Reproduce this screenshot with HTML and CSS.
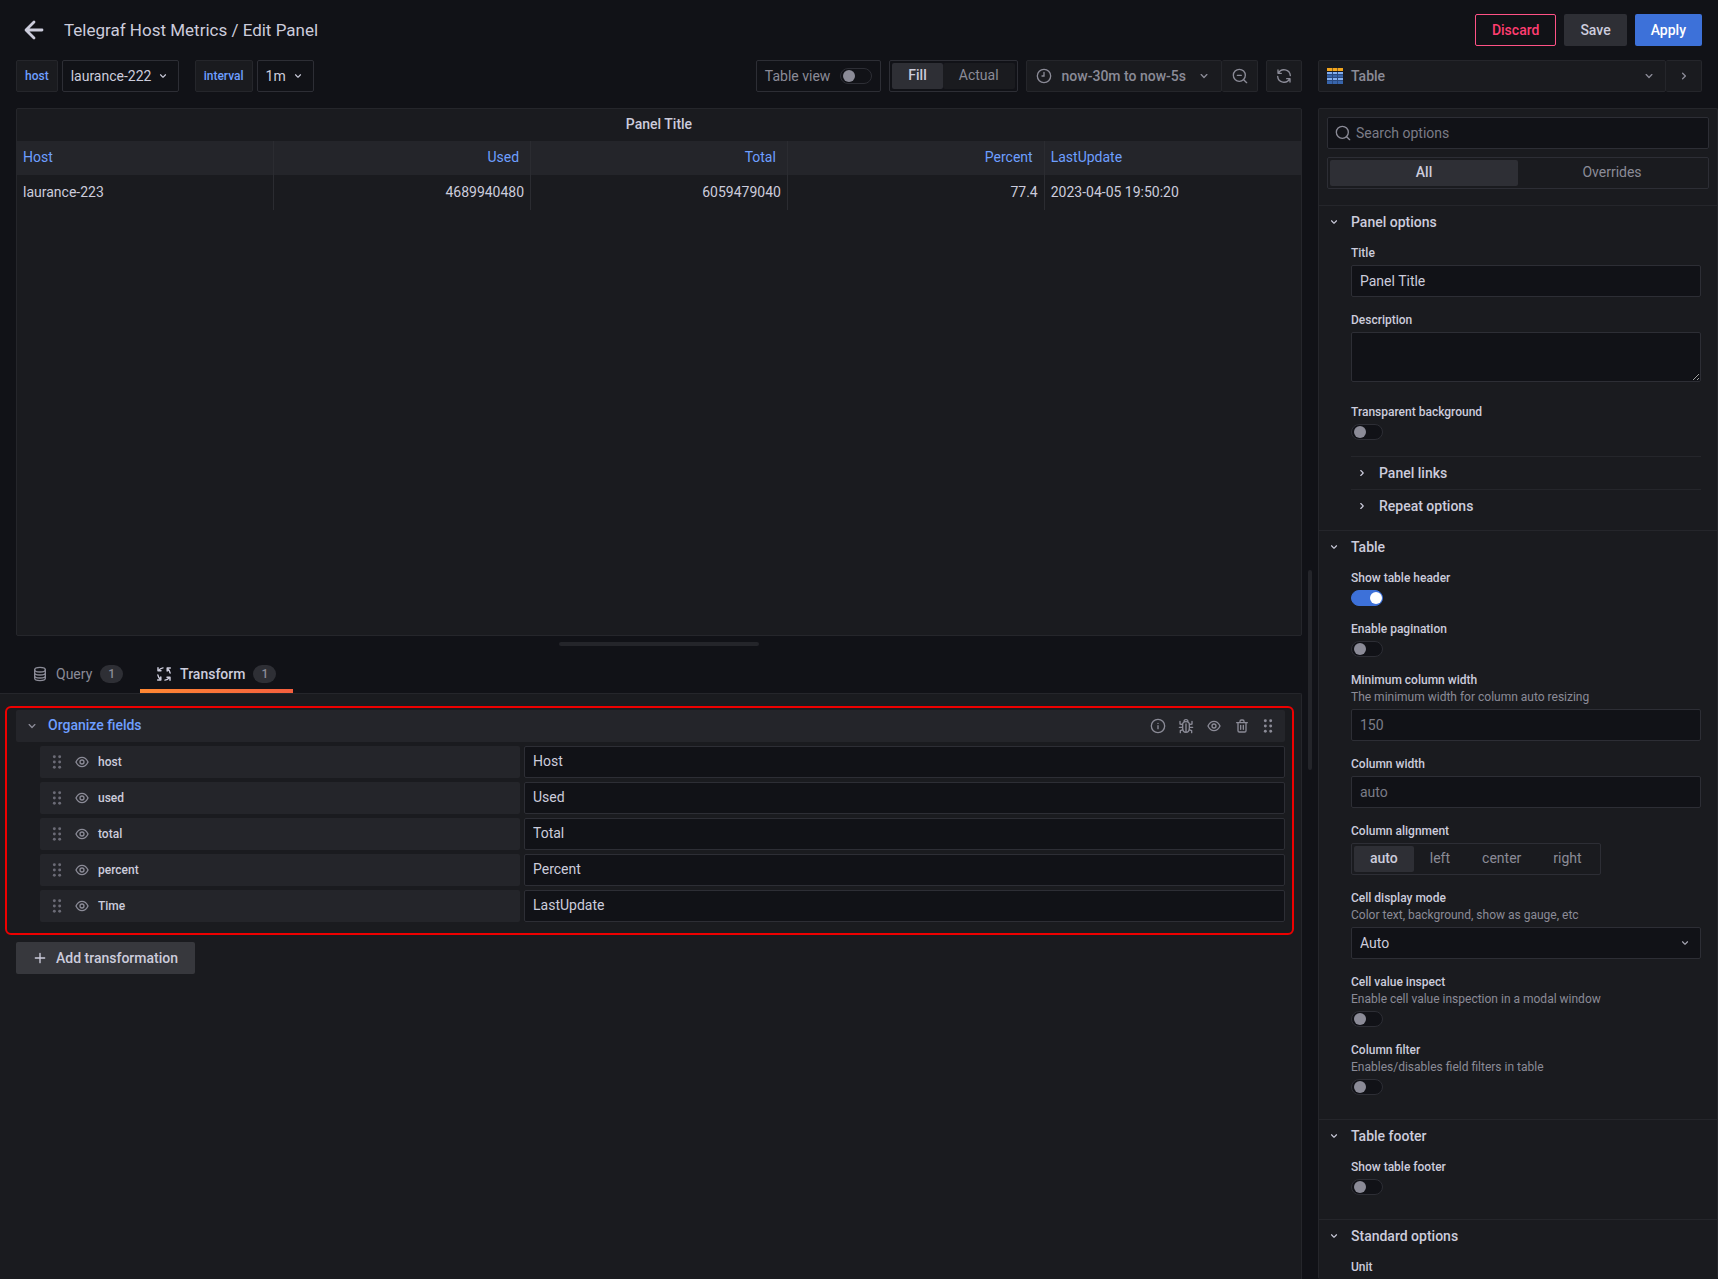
FILE: index.html
```html
<!DOCTYPE html>
<html lang="en">
<head>
<meta charset="utf-8">
<title>Telegraf Host Metrics / Edit Panel</title>
<link rel="stylesheet" href="styles.css">
</head>
<body>
<svg class="sprite" aria-hidden="true">
  <symbol id="i-down" viewBox="0 0 24 24"><path fill="currentColor" d="M17,9.17a1,1,0,0,0-1.41,0L12,12.71,8.46,9.17a1,1,0,0,0-1.41,0,1,1,0,0,0,0,1.42l4.24,4.24a1,1,0,0,0,1.42,0L17,10.59A1,1,0,0,0,17,9.17Z"/></symbol>
  <symbol id="i-right" viewBox="0 0 24 24"><path fill="currentColor" d="M14.83,11.29,10.59,7.05a1,1,0,0,0-1.42,0,1,1,0,0,0,0,1.41L12.71,12,9.17,15.54a1,1,0,0,0,0,1.41,1,1,0,0,0,.71.29,1,1,0,0,0,.71-.29l4.24-4.24A1,1,0,0,0,14.83,11.29Z"/></symbol>
  <symbol id="i-eye" viewBox="0 0 24 24"><path fill="currentColor" d="M21.92,11.6C19.9,6.91,16.1,4,12,4S4.1,6.91,2.08,11.6a1,1,0,0,0,0,.8C4.1,17.09,7.9,20,12,20s7.9-2.91,9.92-7.6A1,1,0,0,0,21.92,11.6ZM12,18c-3.17,0-6.17-2.29-7.9-6C5.83,8.29,8.83,6,12,6s6.17,2.29,7.9,6C18.17,15.71,15.17,18,12,18ZM12,8a4,4,0,1,0,4,4A4,4,0,0,0,12,8Zm0,6a2,2,0,1,1,2-2A2,2,0,0,1,12,14Z"/></symbol>
  <symbol id="i-grip" viewBox="3 0 18 24"><g fill="currentColor"><circle cx="8" cy="4" r="2.2"/><circle cx="16" cy="4" r="2.2"/><circle cx="8" cy="12" r="2.2"/><circle cx="16" cy="12" r="2.2"/><circle cx="8" cy="20" r="2.2"/><circle cx="16" cy="20" r="2.2"/></g></symbol>
  <symbol id="i-turn" viewBox="0 0 24 24"><path fill="none" stroke="currentColor" stroke-width="2.2" stroke-linecap="round" stroke-linejoin="round" d="M3 2.500V7.200H7.500M3.800 7A9.800 9.800 0 0 1 10.500 2.800"/></symbol>
</svg>

<div class="editor">
  <header class="topbar">
    <button class="back" type="button" aria-label="Go back"><svg class="icon-l" viewBox="0 0 24 24" fill="none" stroke="currentColor" stroke-width="2.8" stroke-linecap="round" stroke-linejoin="round"><path d="M20 12H4.500M12 4l-8 8 8 8"/></svg></button>
    <h1>Telegraf Host Metrics / Edit Panel</h1>
    <div class="actions">
      <button class="btn danger" type="button">Discard</button>
      <button class="btn" type="button">Save</button>
      <button class="btn primary" type="button">Apply</button>
    </div>
  </header>

  <div class="columns">
    <main class="left">
      <div class="toolbar">
        <div class="variable">
          <label class="var-label" for="var-host">host</label>
          <span class="picker"><select id="var-host"><option>laurance-222</option></select><svg class="icon"><use href="#i-down"/></svg></span>
        </div>
        <div class="variable">
          <label class="var-label" for="var-interval">interval</label>
          <span class="picker"><select id="var-interval"><option>1m</option></select><svg class="icon"><use href="#i-down"/></svg></span>
        </div>
        <div class="view-tools">
          <label class="table-view">Table view <input class="switch" type="checkbox"></label>
          <div class="segments dark">
            <label><input type="radio" name="size" checked><span>Fill</span></label>
            <label><input type="radio" name="size"><span>Actual</span></label>
          </div>
          <div class="joined">
            <button class="tool time" type="button">
              <svg class="icon" viewBox="0 0 24 24" fill="none" stroke="currentColor" stroke-width="2" stroke-linecap="round"><circle cx="12" cy="12" r="10"/><path d="M12 6.500V12H9"/></svg>
              <span>now-30m to now-5s</span>
              <svg class="icon"><use href="#i-down"/></svg>
            </button>
            <button class="tool square" type="button" aria-label="Zoom out"><svg class="icon" viewBox="0 0 24 24" fill="none" stroke="currentColor" stroke-width="2" stroke-linecap="round"><circle cx="11" cy="11" r="9"/><path d="M8 11h6M17.500 17.500 22 22"/></svg></button>
          </div>
          <button class="tool square" type="button" aria-label="Refresh"><svg class="icon" viewBox="0 0 24 24" fill="none" stroke="currentColor" stroke-width="2" stroke-linecap="round" stroke-linejoin="round"><path d="M3 3v5h5M3.500 8A9.500 9.500 0 0 1 21.500 11.500M21 21v-5h-5M20.500 16A9.500 9.500 0 0 1 2.500 12.500"/></svg></button>
        </div>
      </div>

      <div class="panes">
        <section class="panel">
          <h2>Panel Title</h2>
          <table>
            <thead>
              <tr><th>Host</th><th class="num">Used</th><th class="num">Total</th><th class="num">Percent</th><th>LastUpdate</th></tr>
            </thead>
            <tbody>
              <tr><td>laurance-223</td><td class="num">4689940480</td><td class="num">6059479040</td><td class="num">77.4</td><td>2023-04-05 19:50:20</td></tr>
            </tbody>
          </table>
        </section>

        <section class="bottom">
          <div class="drag-x"></div>
          <nav class="tabs">
            <button class="tab" type="button">
              <svg class="icon" viewBox="0 0 24 24" fill="none" stroke="currentColor" stroke-width="2" stroke-linecap="round"><ellipse cx="12" cy="5.500" rx="8" ry="3.500"/><path d="M4 5.500v13c0 2 3.600 3.500 8 3.500s8-1.500 8-3.500v-13M4 10c0 2 3.600 3.500 8 3.500s8-1.500 8-3.500M4 14.500c0 2 3.600 3.500 8 3.500s8-1.500 8-3.500"/></svg>
              Query <span class="count">1</span>
            </button>
            <button class="tab active" type="button">
              <svg class="icon" viewBox="0 0 24 24"><use href="#i-turn"/><use href="#i-turn" transform="rotate(90 12 12)"/><use href="#i-turn" transform="rotate(180 12 12)"/><use href="#i-turn" transform="rotate(270 12 12)"/></svg>
              Transform <span class="count">1</span>
            </button>
          </nav>
          <div class="transforms">
            <section class="highlight">
              <header class="op-head">
                <svg class="icon"><use href="#i-down"/></svg>
                <h3>Organize fields</h3>
                <div class="op-tools">
                  <button class="ghost" type="button" aria-label="Info"><svg class="icon" viewBox="0 0 24 24" fill="none" stroke="currentColor" stroke-width="2" stroke-linecap="round"><circle cx="12" cy="12" r="10"/><path d="M12 11.500V16M12 8v.1"/></svg></button>
                  <button class="ghost" type="button" aria-label="Debug"><svg class="icon" viewBox="0 0 24 24" fill="none" stroke="currentColor" stroke-width="2" stroke-linecap="round" stroke-linejoin="round"><path d="M7 10c0-3 2-4.500 5-4.500s5 1.500 5 4.500v5c0 4-2 6.500-5 6.500S7 19 7 15zM12 9v12M9 5.500C9 3.500 10 2.500 12 2.500s3 1 3 3M7 10 3 9V5M17 10l4-1V5M7 14H2M17 14h5M7.500 17.500 3.500 19v3M16.500 17.500l4 1.500v3"/></svg></button>
                  <button class="ghost" type="button" aria-label="Disable"><svg class="icon"><use href="#i-eye"/></svg></button>
                  <button class="ghost" type="button" aria-label="Remove"><svg class="icon" viewBox="0 0 24 24"><path fill="currentColor" d="M10,18a1,1,0,0,0,1-1V11a1,1,0,0,0-2,0v6A1,1,0,0,0,10,18ZM20,6H16V5a3,3,0,0,0-3-3H11A3,3,0,0,0,8,5V6H4A1,1,0,0,0,4,8H5V19a3,3,0,0,0,3,3h8a3,3,0,0,0,3-3V8h1a1,1,0,0,0,0-2ZM10,5a1,1,0,0,1,1-1h2a1,1,0,0,1,1,1V6H10Zm7,14a1,1,0,0,1-1,1H8a1,1,0,0,1-1-1V8H17Zm-3-1a1,1,0,0,0,1-1V11a1,1,0,0,0-2,0v6A1,1,0,0,0,14,18Z"/></svg></button>
                  <svg class="icon grip"><use href="#i-grip"/></svg>
                </div>
              </header>
              <div class="rows">
                <div class="row"><div class="name"><svg class="icon grip"><use href="#i-grip"/></svg><button class="ghost" type="button" aria-label="Hide host"><svg class="icon"><use href="#i-eye"/></svg></button><label for="f-host">host</label></div><input class="text" id="f-host" value="Host"></div>
                <div class="row"><div class="name"><svg class="icon grip"><use href="#i-grip"/></svg><button class="ghost" type="button" aria-label="Hide used"><svg class="icon"><use href="#i-eye"/></svg></button><label for="f-used">used</label></div><input class="text" id="f-used" value="Used"></div>
                <div class="row"><div class="name"><svg class="icon grip"><use href="#i-grip"/></svg><button class="ghost" type="button" aria-label="Hide total"><svg class="icon"><use href="#i-eye"/></svg></button><label for="f-total">total</label></div><input class="text" id="f-total" value="Total"></div>
                <div class="row"><div class="name"><svg class="icon grip"><use href="#i-grip"/></svg><button class="ghost" type="button" aria-label="Hide percent"><svg class="icon"><use href="#i-eye"/></svg></button><label for="f-percent">percent</label></div><input class="text" id="f-percent" value="Percent"></div>
                <div class="row"><div class="name"><svg class="icon grip"><use href="#i-grip"/></svg><button class="ghost" type="button" aria-label="Hide Time"><svg class="icon"><use href="#i-eye"/></svg></button><label for="f-time">Time</label></div><input class="text" id="f-time" value="LastUpdate"></div>
              </div>
            </section>
            <button class="btn add" type="button"><svg class="icon" viewBox="0 0 24 24" fill="none" stroke="currentColor" stroke-width="2" stroke-linecap="round"><path d="M12 5v14M5 12h14"/></svg>Add transformation</button>
          </div>
        </section>
      </div>
    </main>

    <div class="gutter"><div class="drag-y"></div></div>

    <aside class="right">
      <div class="toolbar viz">
        <button class="tool viz-name" type="button">
          <svg class="icon" viewBox="0 0 16 16" shape-rendering="crispEdges"><path fill="#8a6420" d="M0 0h16v3H0z"/><path fill="#2a4a80" d="M0 4h16v12H0z"/><path fill="#3865ab" d="M0 7h5v2H0zM6 7h4v2H6zM11 7h5v2h-5zM0 13h5v3H0zM6 13h4v3H6zM11 13h5v3h-5z"/><path fill="#84aff1" d="M0 4h5v2H0zM6 4h4v2H6zM11 4h5v2h-5zM0 10h5v2H0zM6 10h4v2H6zM11 10h5v2h-5z"/><path fill="#f2a51e" d="M0 0h5v3H0zM6 0h4v3H6zM11 0h5v3h-5z"/></svg>
          <span>Table</span>
          <svg class="icon"><use href="#i-down"/></svg>
        </button>
        <button class="tool square" type="button" aria-label="Close options"><svg class="icon"><use href="#i-right"/></svg></button>
      </div>

      <div class="options">
        <div class="filters">
          <div class="search">
            <svg class="icon" viewBox="0 0 24 24" fill="none" stroke="currentColor" stroke-width="2" stroke-linecap="round"><circle cx="11" cy="11" r="9"/><path d="M17.500 17.500 22 22"/></svg>
            <input class="text" type="text" placeholder="Search options" aria-label="Search options">
          </div>
          <div class="segments wide">
            <label><input type="radio" name="scope" checked><span>All</span></label>
            <label><input type="radio" name="scope"><span>Overrides</span></label>
          </div>
        </div>

        <section class="group">
          <h3><svg class="icon"><use href="#i-down"/></svg>Panel options</h3>
          <div class="group-body">
            <div class="field"><label for="o-title">Title</label><input class="text" id="o-title" value="Panel Title"></div>
            <div class="field area"><label for="o-desc">Description</label><textarea id="o-desc"></textarea></div>
            <div class="field"><label for="o-transparent">Transparent background</label><input class="switch" id="o-transparent" type="checkbox"></div>
            <button class="sub" type="button"><svg class="icon"><use href="#i-right"/></svg>Panel links</button>
            <button class="sub" type="button"><svg class="icon"><use href="#i-right"/></svg>Repeat options</button>
          </div>
        </section>

        <section class="group">
          <h3><svg class="icon"><use href="#i-down"/></svg>Table</h3>
          <div class="group-body">
            <div class="field"><label for="o-header">Show table header</label><input class="switch" id="o-header" type="checkbox" checked></div>
            <div class="field"><label for="o-pages">Enable pagination</label><input class="switch" id="o-pages" type="checkbox"></div>
            <div class="field"><label for="o-min">Minimum column width</label><p>The minimum width for column auto resizing</p><input class="text" id="o-min" placeholder="150"></div>
            <div class="field"><label for="o-width">Column width</label><input class="text" id="o-width" placeholder="auto"></div>
            <div class="field">
              <span class="caption" id="o-align">Column alignment</span>
              <div class="segments" role="radiogroup" aria-labelledby="o-align">
                <label><input type="radio" name="align" checked><span>auto</span></label>
                <label><input type="radio" name="align"><span>left</span></label>
                <label><input type="radio" name="align"><span>center</span></label>
                <label><input type="radio" name="align"><span>right</span></label>
              </div>
            </div>
            <div class="field"><label for="o-mode">Cell display mode</label><p>Color text, background, show as gauge, etc</p><span class="picker full"><select id="o-mode"><option>Auto</option></select><svg class="icon"><use href="#i-down"/></svg></span></div>
            <div class="field"><label for="o-inspect">Cell value inspect</label><p>Enable cell value inspection in a modal window</p><input class="switch" id="o-inspect" type="checkbox"></div>
            <div class="field"><label for="o-filter">Column filter</label><p>Enables/disables field filters in table</p><input class="switch" id="o-filter" type="checkbox"></div>
          </div>
        </section>

        <section class="group">
          <h3><svg class="icon"><use href="#i-down"/></svg>Table footer</h3>
          <div class="group-body">
            <div class="field"><label for="o-footer">Show table footer</label><input class="switch" id="o-footer" type="checkbox"></div>
          </div>
        </section>

        <section class="group">
          <h3><svg class="icon"><use href="#i-down"/></svg>Standard options</h3>
          <div class="group-body">
            <div class="field"><span class="caption">Unit</span></div>
          </div>
        </section>
      </div>
    </aside>
  </div>
</div>
</body>
</html>
```
FILE: styles.css
```css
:root {
  --canvas: #111217;
  --surface: #1a1b1f;
  --raised: #24252a;
  --selected: #2e2f35;
  --text: #ccccdc;
  --muted: #8b8b97;
  --weak: #25262b;
  --line: #2d2e35;
  --link: #6e9fff;
  --blue: #3d71d9;
}

* { box-sizing: border-box; }

body {
  margin: 0;
  background: var(--canvas);
  color: var(--text);
  font: 14px/22px Roboto, "Liberation Sans", sans-serif;
}

h1, h2, h3, p { margin: 0; font-weight: 500; }
h3 { font-size: 14px; }

button, input, select, textarea { font: inherit; color: inherit; }
button { border: 0; background: none; padding: 0; }

.sprite { display: none; }
.icon { width: 16px; height: 16px; flex: none; }
.icon-l { width: 24px; height: 24px; }

.editor { display: flex; flex-direction: column; height: 100vh; }

/* Top bar */
.topbar { display: flex; align-items: center; height: 60px; padding: 0 16px 0 22px; flex: none; }
.back { display: flex; margin-right: 18px; }
.topbar h1 { font-size: 17px; font-weight: 400; }
.actions { display: flex; gap: 8px; margin-left: auto; }
.btn { display: inline-flex; align-items: center; gap: 8px; height: 32px; padding: 0 16px 1px; border-radius: 2px; background: var(--selected); font-weight: 500; }
.btn.primary { background: var(--blue); color: #fff; }
.btn.danger { background: none; border: 1px solid #ff5286; color: #ff3d71; }

/* Page columns */
.columns { display: flex; flex: 1; min-height: 0; }
.left { display: flex; flex-direction: column; flex: 1; min-width: 0; }
.gutter { display: flex; align-items: center; justify-content: center; width: 16px; }
.drag-y { width: 4px; height: 200px; border-radius: 2px; background: var(--raised); }
.right { display: flex; flex-direction: column; width: 400px; }

.toolbar { display: flex; gap: 16px; height: 48px; padding: 0 0 16px 16px; flex: none; }
.variable { display: flex; gap: 4px; }
.var-label { display: flex; align-items: center; padding: 0 8px; border: 1px solid var(--weak); border-radius: 2px; background: var(--surface); color: var(--link); font-size: 12px; font-weight: 500; }

.picker { display: inline-grid; align-items: center; }
.picker > * { grid-area: 1 / 1; }
.picker .icon { width: 14px; height: 14px; justify-self: end; margin-right: 9px; pointer-events: none; }
.picker select { appearance: none; height: 32px; padding: 0 26px 0 8px; border: 1px solid var(--line); border-radius: 2px; background: var(--canvas); }
.picker.full .icon { color: #a9a9b6; }

.view-tools { display: flex; gap: 8px; margin-left: auto; color: var(--muted); }
.table-view { display: flex; align-items: center; gap: 10px; padding: 0 8px; border: 1px solid var(--line); border-radius: 2px; }
.joined { display: flex; }
.tool { display: flex; align-items: center; height: 32px; border: 1px solid var(--weak); border-radius: 2px; background: var(--surface); color: var(--muted); font-weight: 500; }
.time { gap: 10px; padding: 0 9px; }
.square { justify-content: center; width: 36px; }
.tool + .square { width: 36px; border-left: 0; }

/* Radio segments */
.segments { display: inline-flex; padding: 2px; border: 1px solid var(--line); border-radius: 2px; color: var(--muted); }
.segments label { display: grid; }
.segments input { appearance: none; margin: 0; grid-area: 1 / 1; }
.segments span { grid-area: 1 / 1; height: 26px; padding: 0 16px; border-radius: 2px; line-height: 24px; text-align: center; }
.segments input:checked + span { background: var(--selected); color: var(--text); font-weight: 500; }
.segments.dark span { background: var(--surface); }
.segments.wide { display: grid; grid-template-columns: 1fr 1fr; }

/* Toggle switch */
.switch { appearance: none; display: flex; align-items: center; width: 32px; height: 16px; margin: 0; padding: 0 2px; border: 1px solid var(--line); border-radius: 8px; background: var(--canvas); }
.switch::before { content: ""; width: 12px; height: 12px; border-radius: 50%; background: var(--muted); }
.switch:checked { justify-content: flex-end; padding-right: 0; border-color: var(--blue); background: var(--blue); }
.switch:checked::before { background: #fff; }

/* Visualization panel above the query and transform pane */
.panes { display: grid; grid-template-rows: minmax(0, 528fr) minmax(0, 643fr); flex: 1; min-height: 0; }
.panel { margin-left: 16px; border: 1px solid var(--weak); border-radius: 2px; background: var(--surface); }
.panel h2 { height: 32px; font-size: 14px; line-height: 30px; text-align: center; }
.panel table { width: 100%; border-collapse: collapse; table-layout: fixed; }
.panel th, .panel td { height: 34px; padding: 0 6px 2px; text-align: left; font-weight: 400; }
.panel td { height: 35px; }
.panel th { background: var(--raised); color: var(--link); }
.panel th:not(:last-child), .panel td:not(:last-child) { border-right: 1px solid #2b2c31; }
.panel .num { text-align: right; }
.panel th.num { padding-right: 11px; }

.bottom { display: flex; flex-direction: column; min-height: 0; }
.drag-x { width: 200px; height: 4px; margin: 6px 0 6px 16px; align-self: center; border-radius: 2px; background: var(--raised); flex: none; }
.tabs { display: flex; height: 41px; padding-left: 16px; flex: none; }
.tab { display: flex; align-items: center; gap: 8px; padding: 6px 17px 0 16px; border-bottom: 4px solid transparent; color: var(--muted); }
.tab.active { color: var(--text); font-weight: 500; background: linear-gradient(90deg, #ff8833, #f55f3e) bottom / 100% 4px no-repeat border-box; }
.count { padding: 0 8px; border-radius: 10px; background: var(--selected); color: var(--muted); font-size: 12px; font-weight: 500; line-height: 18px; }

.transforms { flex: 1; min-height: 0; padding: 12px 7px 0 5px; border: solid var(--weak); border-width: 1px 1px 0 0; border-radius: 0 2px 0 0; background: var(--surface); }
.highlight { padding: 2px 7px 11px 9px; border: 2px solid #ee0000; border-radius: 6px; }
.op-head { display: flex; align-items: center; height: 32px; padding: 0 11px 0 8px; border-radius: 2px; background: var(--raised); color: var(--muted); }
.op-head h3 { height: 32px; margin-left: 8px; color: var(--link); line-height: 30px; }
.op-tools { display: flex; align-items: center; gap: 12px; margin-left: auto; }
.ghost { display: flex; color: var(--muted); }
.rows { display: grid; gap: 4px; padding: 4px 0 0 24px; }
.row { display: grid; grid-template-columns: 480px 1fr; gap: 4px; }
.name { display: flex; align-items: center; height: 32px; padding-left: 11px; border-radius: 2px; background: var(--raised); font-size: 12px; font-weight: 500; }
.grip { width: 12px; }
.name .grip { margin-right: 11px; color: #6b6b76; }
.name label { margin-left: 8px; }
.add { margin: 7px 0 0 11px; padding: 0 17px 1px 16px; background: #37383d; }

.text { width: 100%; height: 32px; padding: 0 8px 2px; border: 1px solid var(--line); border-radius: 2px; background: var(--canvas); }
.text::placeholder { color: #7b7c87; opacity: 1; }

/* Options pane */
.viz { gap: 0; padding: 0 16px 16px 0; }
.viz-name { flex: 1; gap: 8px; padding: 0 8px; }
.viz-name span { flex: 1; text-align: left; }
.options { flex: 1; min-height: 0; overflow-y: auto; scrollbar-width: none; border: 1px solid var(--weak); border-bottom: 0; border-radius: 2px; background: var(--surface); }
.options .text { padding-bottom: 0; }
.filters { display: grid; gap: 8px; padding: 8px 8px 16px; }
.search { display: grid; align-items: center; color: var(--muted); }
.search > * { grid-area: 1 / 1; }
.search .icon { z-index: 1; margin-left: 8px; }
.search .text { padding-left: 28px; }
.group { border-top: 1px solid var(--weak); padding-bottom: 8px; }
.group h3 { display: flex; align-items: center; gap: 10px; height: 32px; padding-left: 8px; }
.group h3 .icon, .sub .icon { width: 14px; height: 14px; }
.group-body { padding: 8px 16px 0 32px; }
.field { display: flex; flex-direction: column; align-items: flex-start; margin-bottom: 16px; }
.field label, .caption { font-size: 12px; font-weight: 500; line-height: 15px; margin-bottom: 4px; }
.field p { margin: -2px 0 4px; color: var(--muted); font-size: 12px; font-weight: 400; line-height: 15px; }
.field .segments label { margin: 0; font-size: 14px; font-weight: 400; }
.field .picker { display: grid; width: 100%; }
.area { margin-bottom: 23px; }
.area textarea { width: 100%; height: 50px; padding: 4px 8px; border: 1px solid var(--line); border-radius: 2px; background: var(--canvas); resize: vertical; }
.sub { display: flex; align-items: center; gap: 10px; width: 100%; height: 33px; padding-left: 4px; border-top: 1px solid var(--weak); font-weight: 500; }
.group:last-child { padding: 0; }
.group:last-child .field { margin: 0; }
```
